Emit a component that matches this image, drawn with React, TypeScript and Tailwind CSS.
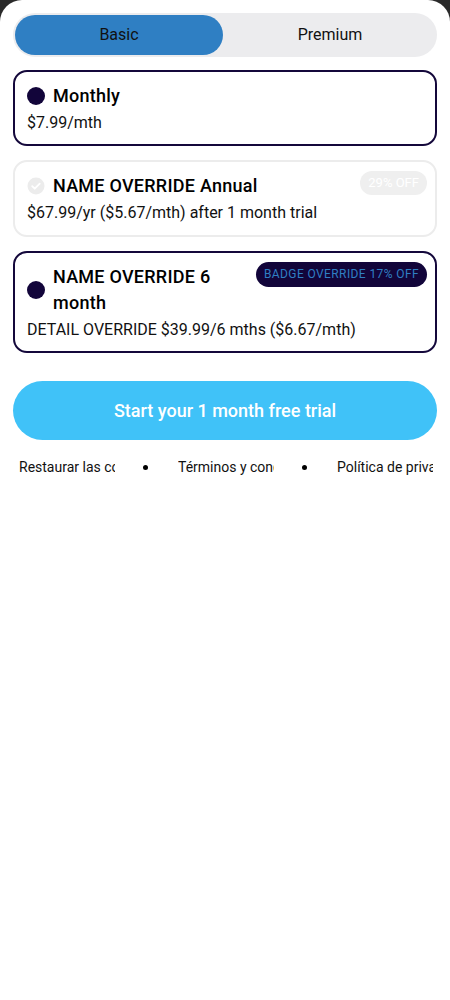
import type { ReactNode } from "react";

function Dot() {
  return <span className="block w-[18px] h-[18px] rounded-full bg-[#12053a] shrink-0" />;
}

function Check() {
  return (
    <svg width="18" height="18" viewBox="0 0 18 18" className="shrink-0">
      <circle cx="9" cy="9" r="8.5" fill="#ececec" />
      <path d="M5.2 9.2l2.5 2.5 5-5" stroke="#fff" strokeWidth="1.8" fill="none" strokeLinecap="round" strokeLinejoin="round" />
    </svg>
  );
}

function PlanCard({
  icon,
  title,
  detail,
  badge,
  active,
}: {
  icon: ReactNode;
  title: string;
  detail: string;
  badge?: ReactNode;
  active?: boolean;
}) {
  return (
    <div
      className={`rounded-[14px] border-2 pt-[11px] px-3 ${
        active ? "border-[#14083b] pb-[10px]" : "border-[#ececec] pb-[11px]"
      }`}
    >
      <div className="flex items-center gap-2">
        {icon}
        <div className="flex-1 text-[18px] leading-[26px] font-medium tracking-[0.25px] text-black">{title}</div>
        {badge && <div className="self-start -mt-[3px] -mr-[4px] ml-2">{badge}</div>}
      </div>
      <div className="mt-[3px] text-[16px] leading-[22px] text-[#111]">{detail}</div>
    </div>
  );
}

export default function App() {
  return (
    <div className="min-h-screen bg-[#2a2a2a]" style={{ fontFamily: "Roboto, 'Liberation Sans', sans-serif" }}>
      <div className="min-h-screen bg-white rounded-t-[22px] p-[13px]">
        {/* Tabs */}
        <div className="grid grid-cols-2 p-[2px] rounded-full bg-[#ececee]">
          <div className="h-10 mr-[2px] rounded-full bg-[#2f7fc3] flex items-center justify-center text-base text-[#111]">
            Basic
          </div>
          <div className="h-10 flex items-center justify-center text-base text-[#111]">Premium</div>
        </div>

        <div className="mt-[13px] flex flex-col gap-[14px]">
          <PlanCard icon={<Dot />} title="Monthly" detail="$7.99/mth" active />
          <PlanCard
            icon={<Check />}
            title="NAME OVERRIDE Annual"
            detail="$67.99/yr ($5.67/mth) after 1 month trial"
            badge={
              <span className="inline-flex items-center h-6 px-2 rounded-full bg-[#efefef] text-[13px] text-white">
                29% OFF
              </span>
            }
          />
          <PlanCard
            icon={<Dot />}
            title="NAME OVERRIDE 6 month"
            detail="DETAIL OVERRIDE $39.99/6 mths ($6.67/mth)"
            active
            badge={
              <span className="inline-flex items-center h-[25px] px-[8px] rounded-full bg-[#12053a] text-[12px] tracking-[0.4px] text-[#2f7fc3] whitespace-nowrap">
                BADGE OVERRIDE 17% OFF
              </span>
            }
          />
        </div>

        <button className="mt-[28px] w-full h-[59px] rounded-full bg-[#40c2f8] text-white text-[18px] font-medium">
          Start your 1 month free trial
        </button>

        <div className="mt-[17px] flex items-center pl-[6px] text-[14px] leading-5 text-[#111]">
          <span className="w-[96px] overflow-hidden whitespace-nowrap">Restaurar las compras</span>
          <span className="w-[63px] flex justify-center"><span className="block w-[5px] h-[5px] rounded-full bg-black -ml-[2px]" /></span>
          <span className="w-[96px] overflow-hidden whitespace-nowrap">Términos y condiciones</span>
          <span className="w-[63px] flex justify-center"><span className="block w-[5px] h-[5px] rounded-full bg-black -ml-[2px]" /></span>
          <span className="w-[96px] overflow-hidden whitespace-nowrap">Política de privacidad</span>
        </div>
      </div>
    </div>
  );
}
